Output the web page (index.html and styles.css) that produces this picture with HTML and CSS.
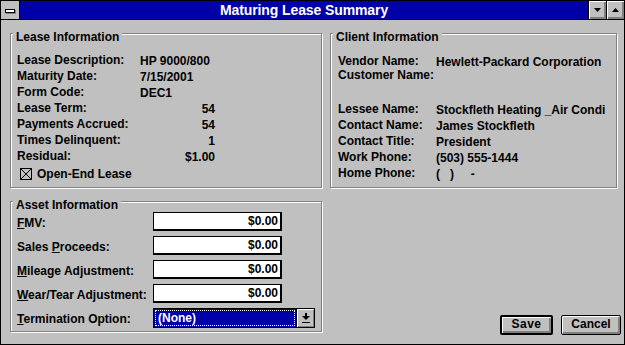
FILE: index.html
```html
<!DOCTYPE html>
<html>
<head>
<meta charset="utf-8">
<title>Maturing Lease Summary</title>
<link rel="stylesheet" href="styles.css">
</head>
<body>
<div class="window">
  <div class="titlebar">
    <div class="sysmenu"><span class="sysbar"></span></div>
    <div class="title">Maturing Lease Summary</div>
    <div class="tbtn"><svg width="7" height="4" viewBox="0 0 7 4"><polygon points="0,0 7,0 3.5,4" fill="#000"/></svg></div>
    <div class="tbtn"><svg width="7" height="4" viewBox="0 0 7 4"><polygon points="0,4 7,4 3.5,0" fill="#000"/></svg></div>
  </div>
  <div class="content">
    <div class="leftcol">
      <div class="group lease">
        <span class="legend">Lease Information</span>
        <div class="lease-grid">
          <span class="lbl">Lease Description:</span><span class="val">HP 9000/800</span>
          <span class="lbl">Maturity Date:</span><span class="val">7/15/2001</span>
          <span class="lbl">Form Code:</span><span class="val">DEC1</span>
          <span class="lbl">Lease Term:</span><span class="val num">54</span>
          <span class="lbl">Payments Accrued:</span><span class="val num">54</span>
          <span class="lbl">Times Delinquent:</span><span class="val num">1</span>
          <span class="lbl">Residual:</span><span class="val num">$1.00</span>
        </div>
        <div class="check">
          <svg class="cbox" width="12" height="12" viewBox="0 0 12 12"><rect x="0.5" y="0.5" width="11" height="11" fill="none" stroke="#000"/><path d="M1 1 L11 11 M11 1 L1 11" stroke="#000" stroke-width="1"/></svg>
          <span>Open-End Lease</span>
        </div>
      </div>
      <div class="group asset">
        <span class="legend">Asset Information</span>
        <div class="asset-grid">
          <span class="lbl"><u>F</u>MV:</span><div class="edit">$0.00</div>
          <span class="lbl">Sales <u>P</u>roceeds:</span><div class="edit">$0.00</div>
          <span class="lbl"><u>M</u>ileage Adjustment:</span><div class="edit">$0.00</div>
          <span class="lbl"><u>W</u>ear/Tear Adjustment:</span><div class="edit">$0.00</div>
          <span class="lbl"><u>T</u>ermination Option:</span>
          <div class="combo">
            <div class="combo-field"><span class="focus">(None)</span></div>
            <div class="combo-btn"><svg width="8" height="10" viewBox="0 0 8 10"><rect x="3" y="0" width="2" height="3" fill="#000"/><polygon points="0,3 8,3 4,7" fill="#000"/><rect x="0" y="9" width="8" height="1" fill="#000"/></svg></div>
          </div>
        </div>
      </div>
    </div>
    <div class="rightcol">
      <div class="group client">
        <span class="legend">Client Information</span>
        <div class="client-grid">
          <span class="lbl r1">Vendor Name:</span><span class="val r1">Hewlett-Packard Corporation</span>
          <span class="lbl r1">Customer Name:</span><span class="val r1"></span>
          <span class="spacer"></span><span class="spacer"></span>
          <span class="lbl">Lessee Name:</span><span class="val">Stockfleth Heating _Air Condi</span>
          <span class="lbl">Contact Name:</span><span class="val">James Stockfleth</span>
          <span class="lbl">Contact Title:</span><span class="val">President</span>
          <span class="lbl">Work Phone:</span><span class="val">(503) 555-1444</span>
          <span class="lbl">Home Phone:</span><span class="val phone">(&nbsp;&nbsp;&nbsp;)&nbsp;&nbsp;&nbsp;&nbsp;&nbsp;-</span>
        </div>
      </div>
      <div class="buttons">
        <div class="btn default">Save</div>
        <div class="btn">Cancel</div>
      </div>
    </div>
  </div>
</div>
</body>
</html>
```

FILE: styles.css
```css
* { box-sizing: border-box; }
html, body { margin: 0; padding: 0; }
body {
  background: #c0c0c0;
  font-family: "Liberation Sans", Arial, sans-serif;
  font-weight: bold;
  font-size: 12px;
  color: #000;
}
.window {
  width: 625px;
  height: 345px;
  border: 1px solid #000;
  background: #c0c0c0;
  display: flex;
  flex-direction: column;
}
.titlebar {
  height: 19px;
  flex: none;
  display: flex;
  border-bottom: 1px solid #000;
}
.sysmenu {
  width: 19px;
  border-right: 1px solid #000;
  background: #c0c0c0;
  display: flex;
  align-items: center;
  justify-content: center;
}
.sysbar {
  display: block;
  width: 10px;
  height: 4px;
  border: 1px solid #000;
  background: #fff;
  box-shadow: 1px 1px 0 #808080;
  margin-left: -1px;
  margin-top: 1px;
}
.title {
  flex: 1;
  background: #0000a8;
  color: #fff;
  font-size: 14px;
  line-height: 18px;
  text-align: center;
  letter-spacing: -0.1px;
}
.tbtn {
  width: 18px;
  border-left: 1px solid #000;
  background: #c0c0c0;
  box-shadow: inset 1px 1px 0 #fff, inset -2px -2px 0 #808080;
  display: flex;
  align-items: center;
  justify-content: center;
}
.tbtn svg { display: block; margin-top: -1px; }

.content {
  flex: 1;
  display: flex;
  gap: 8px;
  padding: 13px 0 9px 9px;
}
.leftcol {
  width: 312px;
  display: flex;
  flex-direction: column;
  gap: 13px;
}
.rightcol {
  width: 291px;
  display: flex;
  flex-direction: column;
}
.group {
  position: relative;
  border: 1px solid #808080;
  box-shadow: inset 1px 1px 0 #fff, 1px 1px 0 #fff;
}
.legend {
  position: absolute;
  top: -4px;
  left: 2px;
  padding: 0 3px;
  background: #c0c0c0;
  line-height: 14px;
  white-space: nowrap;
}
.lbl, .val { white-space: nowrap; }

/* Lease */
.lease {
  height: 155px;
  padding: 18px 0 0 6px;
}
.lease-grid {
  display: grid;
  grid-template-columns: 123px 75px;
  grid-auto-rows: 16px;
  line-height: 16px;
}
.lease-grid .val { padding-top: 1px; }
.num { text-align: right; }
.check {
  display: flex;
  align-items: center;
  height: 16px;
  margin-top: 2px;
  padding-left: 3px;
  gap: 5px;
  line-height: 16px;
}
.cbox { display: block; flex: none; }

/* Asset */
.asset {
  height: 131px;
  padding: 10px 0 0 6px;
}
.asset-grid {
  display: grid;
  grid-template-columns: 136px auto;
  grid-auto-rows: 19px;
  row-gap: 5px;
  align-items: center;
  line-height: 16px;
}
.asset-grid .lbl { padding-top: 2px; }
.edit {
  width: 129px;
  height: 19px;
  background: #fff;
  border: 1px solid #000;
  border-right-width: 2px;
  border-bottom-width: 2px;
  text-align: right;
  padding-right: 2px;
  line-height: 16px;
}
.combo {
  width: 162px;
  height: 20px;
  display: flex;
}
.combo-field {
  flex: 1;
  background: #0000a8;
  border: 1px solid #000;
  padding: 1px;
  color: #fff;
}
.focus {
  display: block;
  height: 100%;
  border: 1px dotted #fff;
  padding-left: 2px;
  line-height: 14px;
}
.combo-btn {
  width: 18px;
  border: 1px solid #000;
  border-left: none;
  background: #c0c0c0;
  box-shadow: inset 1px 1px 0 #fff, inset -1px -1px 0 #808080;
  display: flex;
  align-items: center;
  justify-content: center;
}
.combo-btn svg { display: block; }

/* Client */
.client {
  width: 287px;
  height: 155px;
  padding: 20px 0 0 7px;
}
.client-grid {
  display: grid;
  grid-template-columns: 98px auto;
  grid-template-rows: 14px 14px 19px repeat(5, 16px);
  line-height: 16px;
}
.client-grid .r1 { line-height: 14px; }
.client-grid .val { padding-top: 1px; }

/* Buttons */
.buttons {
  margin-top: auto;
  display: flex;
  justify-content: flex-end;
  gap: 8px;
}
.btn {
  height: 20px;
  border: 1px solid #000;
  border-radius: 2px;
  background: #c0c0c0;
  box-shadow: inset 1px 1px 0 #fff, inset -2px -2px 0 #808080;
  text-align: center;
  line-height: 17px;
  width: 60px;
}
.btn.default {
  width: 53px;
  border-width: 2px;
  line-height: 15px;
  letter-spacing: 0.5px;
}
```
